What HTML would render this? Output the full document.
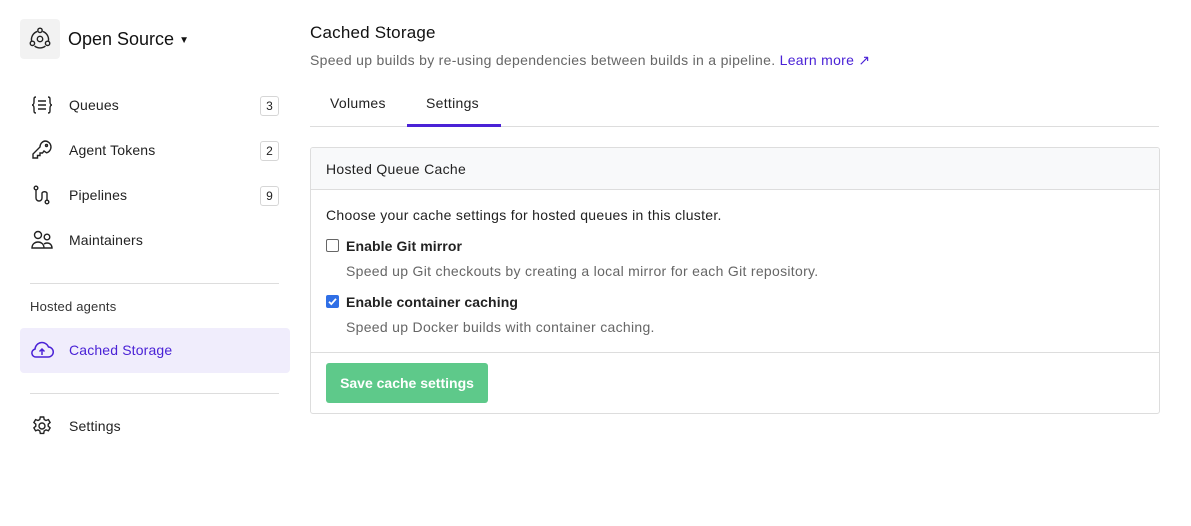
<!DOCTYPE html>
<html><head><style>
*{margin:0;padding:0;box-sizing:border-box}
body{width:1191px;height:526px;background:#fff;font-family:"Liberation Sans",Arial,sans-serif;color:#111;position:relative;overflow:hidden}
.a{position:absolute;white-space:nowrap}
.nav{font-size:14px;color:#222;line-height:16px;letter-spacing:.15px}
.m{letter-spacing:.3px}
.badge{position:absolute;left:260px;width:19px;height:20px;border:1px solid #d6d6d6;border-radius:3px;font-size:12px;text-align:center;line-height:18px;color:#222}
.ic{position:absolute;left:30px;width:24px;height:24px}
.hr{position:absolute;height:1px;background:#ddd}
</style></head><body>
<div class="a" style="left:20px;top:19px;width:40px;height:40px;background:#f2f2f2;border-radius:4px"></div>
<svg class="a" style="left:27px;top:26px" width="26" height="26" viewBox="0 0 24 24" fill="none" stroke="#222" stroke-width="1.3"><circle cx="12" cy="12" r="2.5"/><circle cx="12" cy="4" r="2"/><circle cx="5" cy="16" r="2"/><circle cx="19" cy="16" r="2"/><path d="M9.5 5 A8 8 0 0 0 4.2 13.8 M14.5 5 A8 8 0 0 1 19.8 13.8 M7 18.5 A8 8 0 0 0 17 18.5"/></svg>
<div class="a" style="left:68px;top:29px;font-size:18px;font-weight:500;color:#111">Open Source <span style="font-size:10px;vertical-align:2px">▼</span></div>

<svg class="ic" style="top:93px" viewBox="0 0 24 24" fill="none" stroke="#222" stroke-width="1.4"><path d="M6 4c-2 0-2 1-2 3v2c0 2-1 3-2 3 1 0 2 1 2 3v2c0 2 0 3 2 3M18 4c2 0 2 1 2 3v2c0 2 1 3 2 3-1 0-2 1-2 3v2c0 2 0 3-2 3M8 8h8M8 12h8M8 16h8"/></svg>
<div class="a nav" style="left:69px;top:97px">Queues</div><div class="badge" style="top:96px">3</div>
<svg class="ic" style="top:138px" viewBox="0 0 24 24" fill="none" stroke="#222" stroke-width="1.4"><path d="M15 3a6 6 0 0 1 1.5 11.8L14 13l-1.5 2H10v2.5H7.5V20H3v-4l7-7A6 6 0 0 1 15 3z"/><circle cx="16.5" cy="7.5" r="1"/></svg>
<div class="a nav" style="left:69px;top:142px">Agent Tokens</div><div class="badge" style="top:141px">2</div>
<svg class="ic" style="top:183px" viewBox="0 0 24 24" fill="none" stroke="#222" stroke-width="1.4"><circle cx="6" cy="5" r="1.8"/><circle cx="17" cy="19" r="1.8"/><path d="M6 7v8a3 3 0 0 0 6 0v-5a3 3 0 0 1 5 0v7"/></svg>
<div class="a nav" style="left:69px;top:187px">Pipelines</div><div class="badge" style="top:186px">9</div>
<svg class="ic" style="top:228px" viewBox="0 0 24 24" fill="none" stroke="#222" stroke-width="1.4"><circle cx="8" cy="7" r="3.5"/><circle cx="17" cy="9" r="2.8"/><path d="M2 20c0-4 3-6 6-6s6 2 6 6zM14 20h8c0-3-2-5-5-5-1 0-2 .3-3 1"/></svg>
<div class="a nav" style="left:69px;top:232px">Maintainers</div>
<div class="hr" style="left:30px;top:283px;width:249px"></div>
<div class="a" style="left:30px;top:299px;font-size:13px;color:#333;letter-spacing:.2px">Hosted agents</div>
<div class="a" style="left:20px;top:328px;width:270px;height:45px;background:#f0edfc;border-radius:4px"></div>
<svg class="ic" style="top:338px" viewBox="0 0 24 24" fill="none" stroke="#4a22d6" stroke-width="1.5"><path d="M6 19a4 4 0 0 1-1-7.9A7 7 0 0 1 18.5 9 5 5 0 0 1 18 19z"/><path d="M12 17v-6M9.5 13.5 12 11l2.5 2.5"/></svg>
<div class="a nav" style="left:69px;top:342px;color:#4a22d6">Cached Storage</div>
<div class="hr" style="left:30px;top:393px;width:249px"></div>
<svg class="ic" style="top:414px" viewBox="0 0 24 24" fill="none" stroke="#222" stroke-width="1.4"><circle cx="12" cy="12" r="3"/><path d="M10.3 3h3.4l.5 2.5 1.8 1 2.4-.9 1.7 2.9-1.9 1.7v2l1.9 1.7-1.7 2.9-2.4-.9-1.8 1-.5 2.5h-3.4l-.5-2.5-1.8-1-2.4.9-1.7-2.9 1.9-1.7v-2L3.9 8.5l1.7-2.9 2.4.9 1.8-1z"/></svg>
<div class="a nav" style="left:69px;top:418px">Settings</div>

<div class="a" style="left:310px;top:23px;font-size:17px;color:#111;letter-spacing:.2px">Cached Storage</div>
<div class="a m" style="left:310px;top:52px;font-size:14px;color:#666">Speed up builds by re-using dependencies between builds in a pipeline. <span style="color:#4a22d6">Learn more ↗</span></div>
<div class="a m" style="left:330px;top:95px;font-size:14px;color:#222">Volumes</div>
<div class="a m" style="left:426px;top:95px;font-size:14px;color:#222">Settings</div>
<div class="hr" style="left:310px;top:126px;width:849px"></div>
<div class="a" style="left:407px;top:124px;width:94px;height:3px;background:#4a22d6"></div>

<div class="a" style="left:310px;top:147px;width:850px;height:267px;border:1px solid #ddd;border-radius:3px;overflow:hidden">
<div style="height:42px;background:#f8f9fa;border-bottom:1px solid #ddd"></div>
</div>
<div class="a m" style="left:326px;top:161px;font-size:14px;color:#222">Hosted Queue Cache</div>
<div class="a m" style="left:326px;top:207px;font-size:14px;color:#222">Choose your cache settings for hosted queues in this cluster.</div>
<div class="a" style="left:326px;top:239px;width:13px;height:13px;border:1px solid #666;border-radius:2px;background:#fff"></div>
<div class="a m" style="left:346px;top:238px;font-size:14px;font-weight:bold;color:#222;letter-spacing:.1px">Enable Git mirror</div>
<div class="a m" style="left:346px;top:263px;font-size:14px;color:#666">Speed up Git checkouts by creating a local mirror for each Git repository.</div>
<div class="a" style="left:326px;top:295px;width:13px;height:13px;border-radius:2px;background:#2f6fe6"><svg width="13" height="13" viewBox="0 0 13 13"><path d="M3 6.8l2.3 2.3L10 3.8" fill="none" stroke="#fff" stroke-width="1.8"/></svg></div>
<div class="a m" style="left:346px;top:294px;font-size:14px;font-weight:bold;color:#222;letter-spacing:.1px">Enable container caching</div>
<div class="a m" style="left:346px;top:319px;font-size:14px;color:#666">Speed up Docker builds with container caching.</div>
<div class="hr" style="left:311px;top:352px;width:848px"></div>
<div class="a" style="left:326px;top:363px;width:162px;height:40px;background:#5ec98a;border-radius:3px;color:#fff;font-size:14px;font-weight:bold;text-align:center;line-height:40px">Save cache settings</div>
</body></html>
